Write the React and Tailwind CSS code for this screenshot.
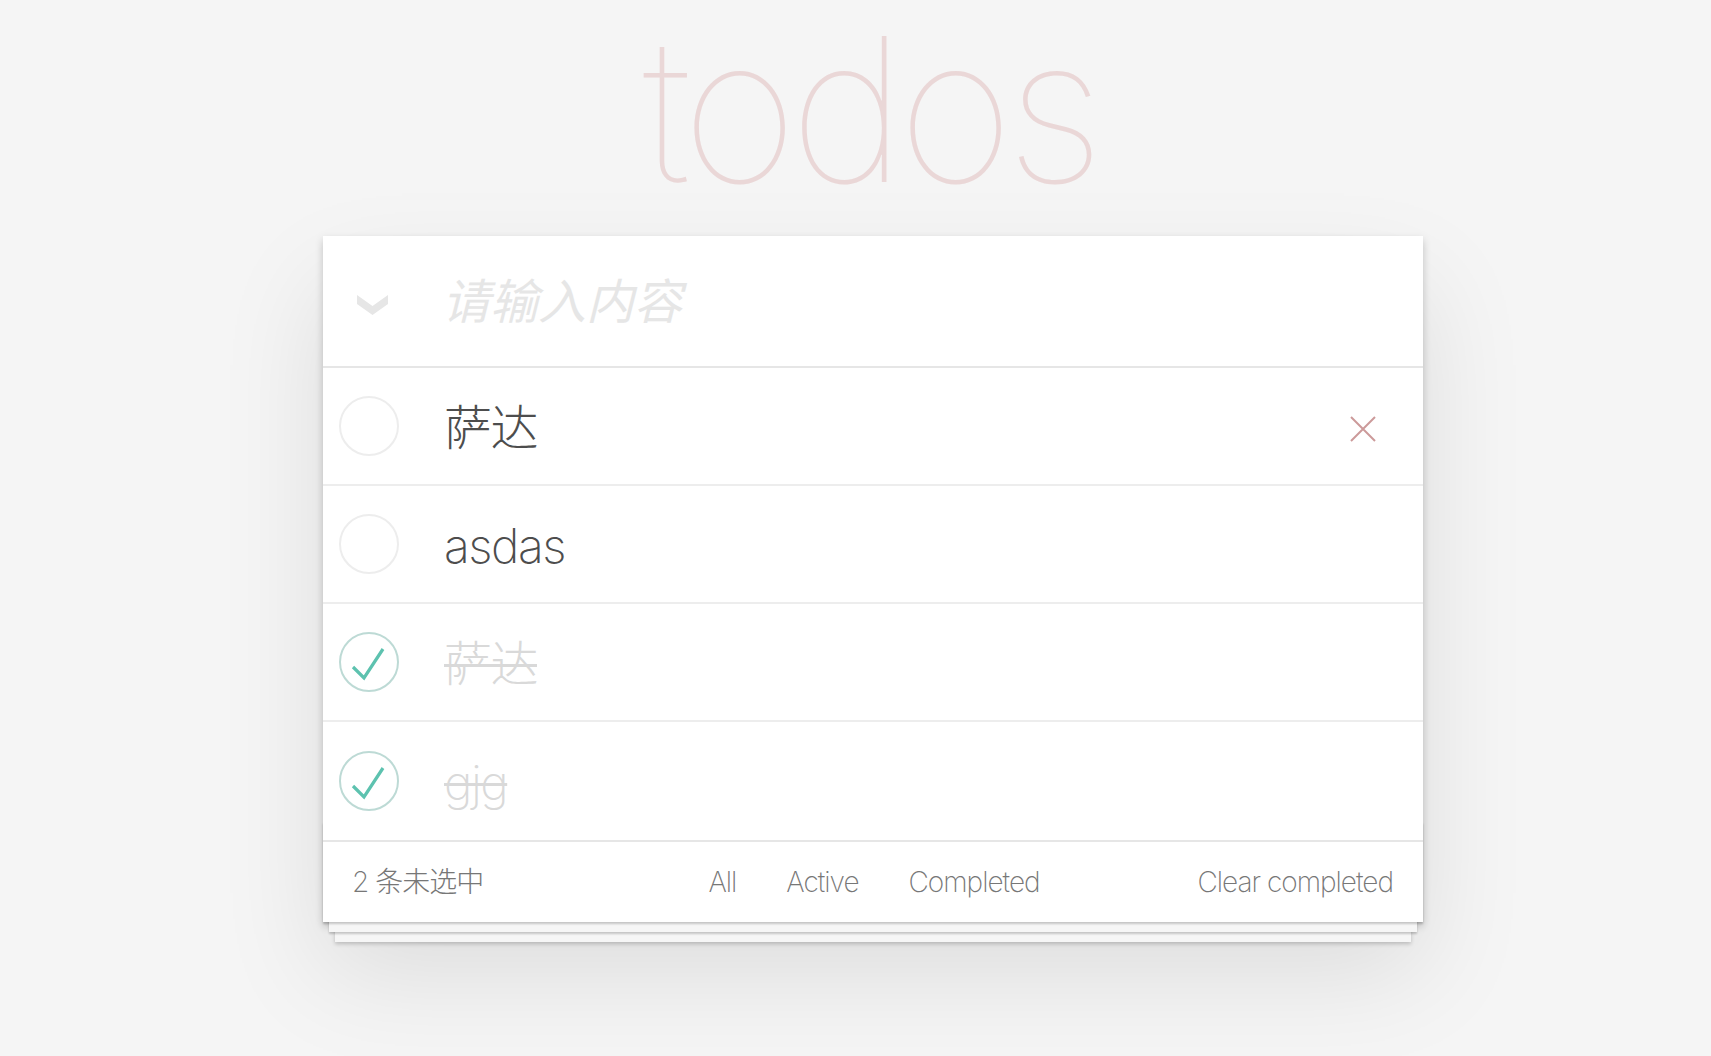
import React from "react";

const FONT = "font-['Inter','Noto_Sans_CJK_SC',sans-serif]";

function Circle({ done }) {
  return (
    <svg width="60" height="60" viewBox="0 0 60 60" className="shrink-0">
      <circle cx="30" cy="30" r="29" fill="none" stroke={done ? "#bddad5" : "#ededed"} strokeWidth="2" />
      {done && (
        <path d="M14 35 L25 46 L44 17" fill="none" stroke="#5dc2af" strokeWidth="3.2" />
      )}
    </svg>
  );
}

function Row({ text, done, hover, last }) {
  return (
    <li
      className={
        "flex h-[118px] items-center pl-[16px] " +
        (last ? "" : "border-b-2 border-[#ededed]")
      }
    >
      <Circle done={done} />
      <span
        className={
          "ml-[45px] mt-[3px] text-[48px] font-extralight tracking-[-1.5px] leading-[58px] " +
          (done
            ? "text-[#d9d9d9] line-through decoration-[3px] decoration-[#d9d9d9]"
            : "text-[#4d4d4d]")
        }
      >
        {text}
      </span>
      {hover && (
        <svg width="26" height="26" viewBox="0 0 26 26" className="ml-auto mr-[47px] mt-[6px]">
          <path d="M1 1 L25 25 M25 1 L1 25" stroke="#cc9a9a" strokeWidth="2" />
        </svg>
      )}
    </li>
  );
}

export default function App() {
  return (
    <div className={"min-h-screen w-full bg-[#f5f5f5] pb-[120px] " + FONT}>
      <div className="flex flex-col items-center pt-[9px] pl-[35px]">
        <h1 className="-mt-[21px] -ml-[7px] h-[242px] text-[200px] leading-[242px] font-[115] tracking-[-8px] text-[#ead7d7]">
          todos
        </h1>
        <section className="relative mt-[6px] w-[1100px] bg-white shadow-[0_4px_8px_0_rgba(0,0,0,0.2),0_50px_100px_0_rgba(0,0,0,0.1)]">
          <header className="flex h-[132px] items-center border-b-2 border-[#e6e6e6]">
            <div className="flex w-[124px] justify-center pr-[28px] pl-[2px] pt-[8px]">
              <svg width="31" height="20" viewBox="0 0 31 20">
                <polygon points="0,0 15.5,11 31,0 31,9 15.5,20 0,9" fill="#e6e6e6" />
              </svg>
            </div>
            <input
              className="-ml-[5px] h-full flex-1 bg-transparent pl-0 text-[48px] italic text-[#4d4d4d] outline-none placeholder:text-[#e6e6e6] placeholder:italic"
              placeholder="请输入内容"
            />
          </header>
          <ul>
            <Row text="萨达" hover />
            <Row text="asdas" />
            <Row text="萨达" done />
            <Row text="gjg" done last />
          </ul>
          <footer className="relative flex h-[82px] items-center border-t-2 border-[#e6e6e6] px-[30px] text-[28px] font-extralight tracking-[-1px] text-[#777]">
            <div className="pointer-events-none absolute inset-x-0 bottom-0 h-[100px] shadow-[0_2px_2px_rgba(0,0,0,0.2),0_16px_0_-6px_#f6f6f6,0_18px_2px_-6px_rgba(0,0,0,0.2),0_32px_0_-12px_#f6f6f6,0_34px_4px_-12px_rgba(0,0,0,0.2)]" />
            <span className="relative -ml-[1px]">2 条未选中</span>
            <div className="absolute inset-x-0 flex justify-center gap-[50px] pl-[2px]">
              <span>All</span>
              <span>Active</span>
              <span>Completed</span>
            </div>
            <span className="relative ml-auto">Clear completed</span>
          </footer>
        </section>
      </div>
    </div>
  );
}
